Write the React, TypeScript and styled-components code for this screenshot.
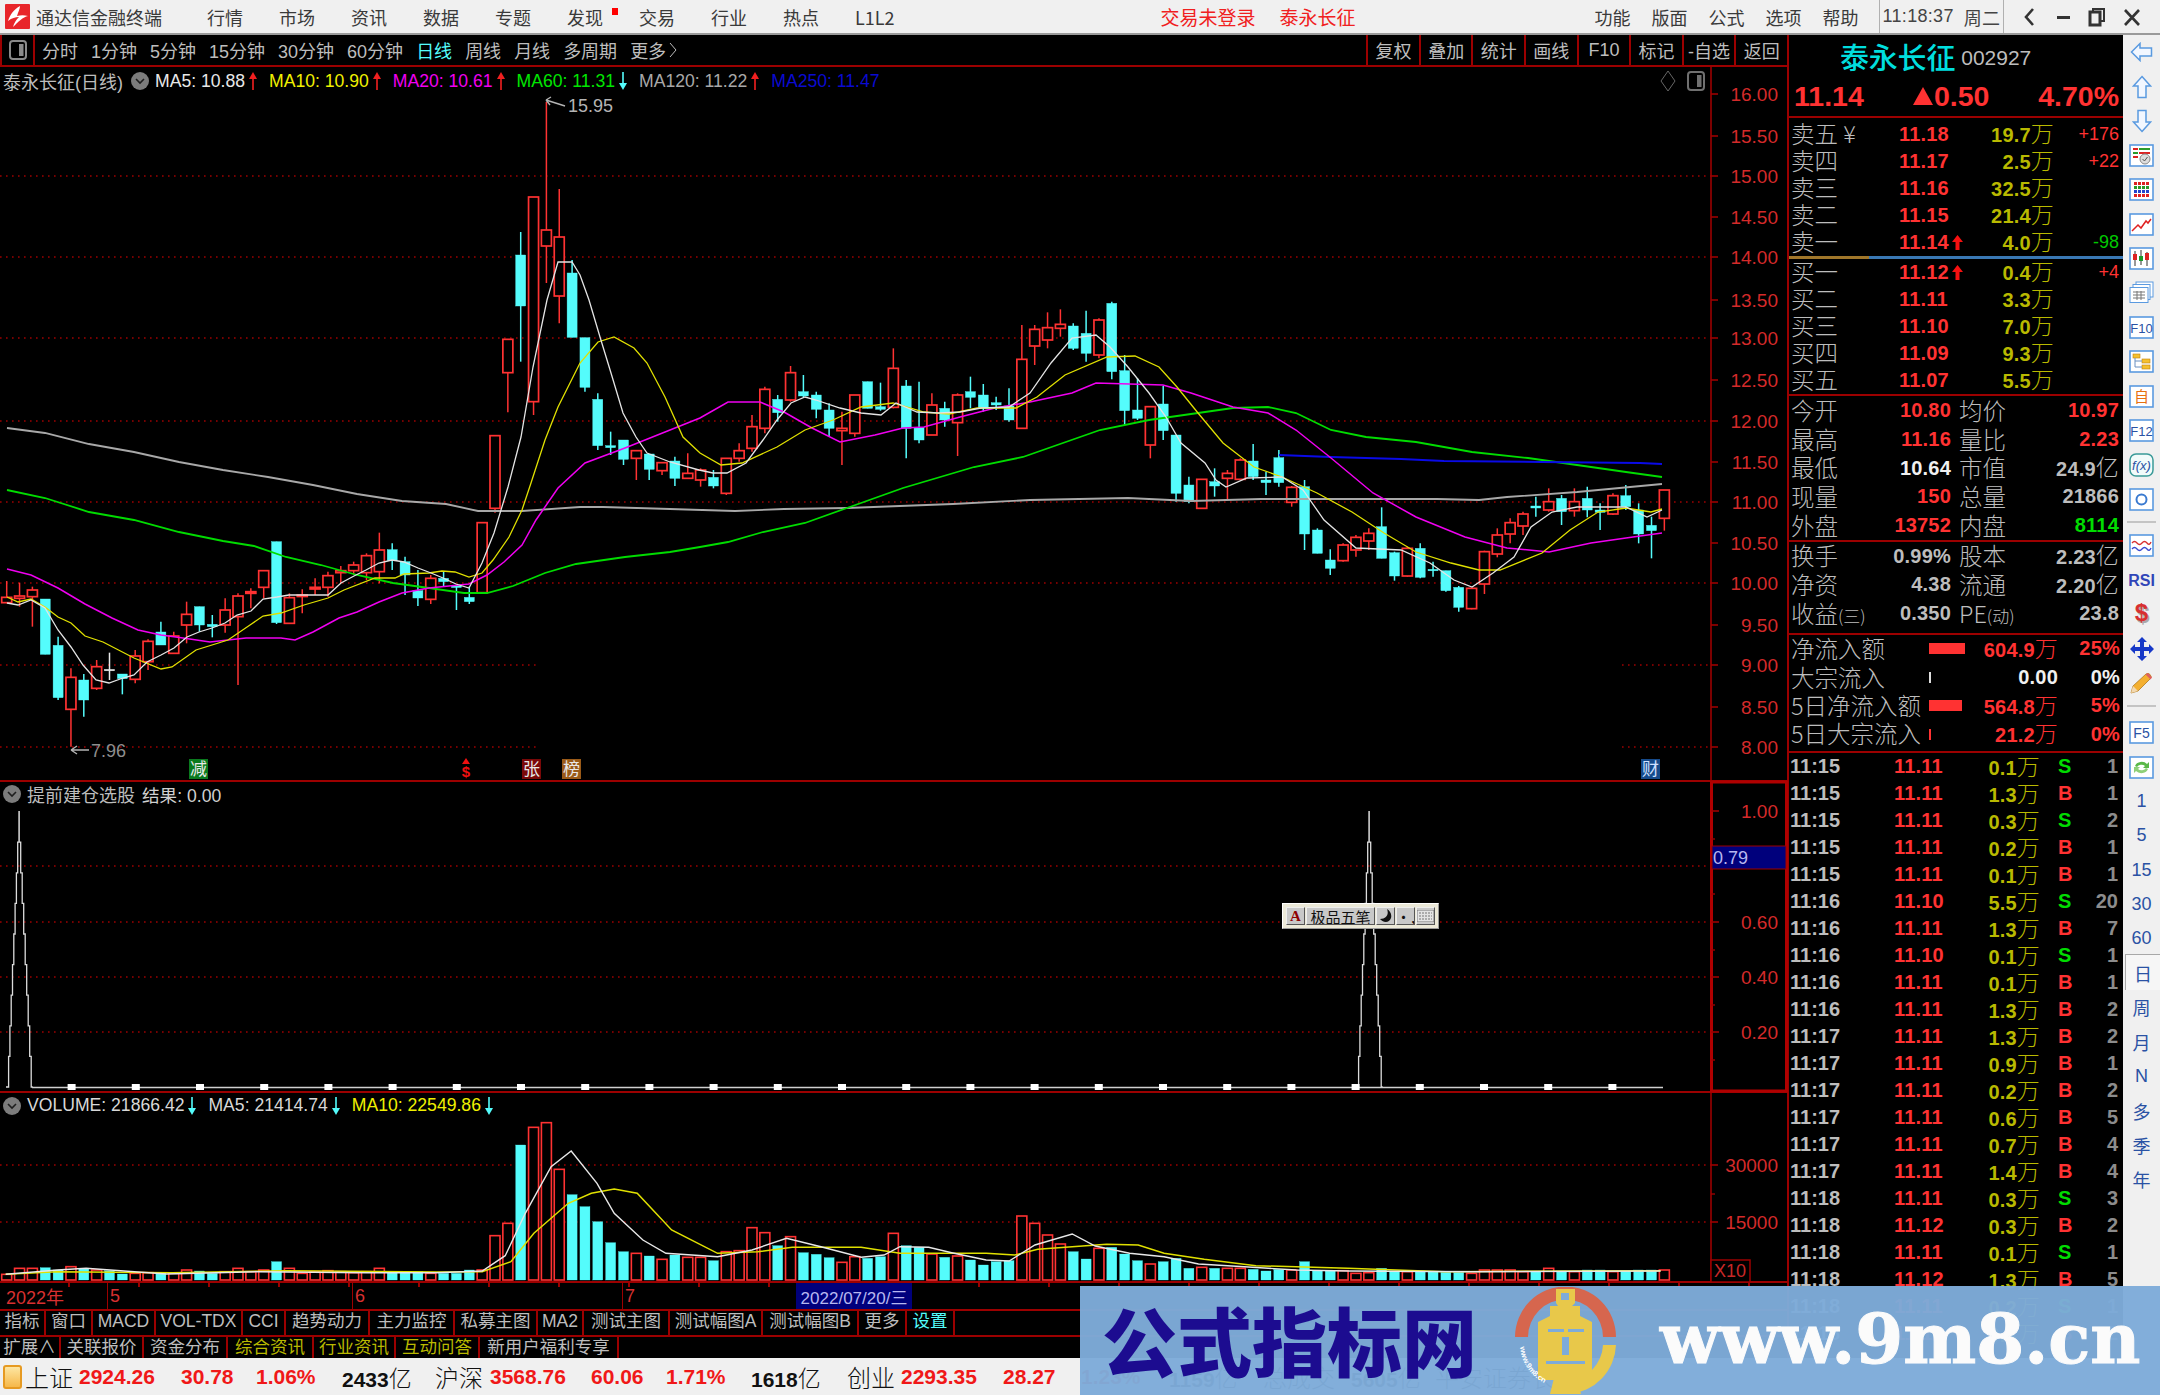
import React from 'react';
import styled, { createGlobalStyle } from 'styled-components';

const FONT = `"Liberation Sans","Noto Sans CJK SC",sans-serif`;
const CJK = `"Noto Sans CJK SC","Liberation Sans",sans-serif`;
const RED = '#ff3232';
const LINE = '#9c0000';
const GRAY = '#bdbdbd';
const CYAN = '#54fcfc';
const OLIVE = '#b9b900';

const Global = createGlobalStyle`
  html, body { margin: 0; padding: 0; background: #000; }
  #root { width: 2160px; height: 1395px; }
  * { box-sizing: border-box; }
`;

const Page = styled.div`
  position: relative;
  width: 2160px;
  height: 1395px;
  overflow: hidden;
  display: flex;
  flex-direction: column;
  background: #000;
  font-family: ${FONT};
  color: ${GRAY};
`;

/* ---------- title bar ---------- */
const TitleBar = styled.header`
  flex: 0 0 35px;
  display: flex;
  align-items: center;
  background: #f0f0f0;
  border-bottom: 2px solid #9a9a9a;
  color: #3a3a3a;
  font-size: 18px;
  font-family: ${CJK};
  white-space: nowrap;
`;
const AppName = styled.span`margin-left: 6px;`;
const Menu = styled.nav`
  display: flex;
  gap: ${(p: any) => p.$gap}px;
  margin-left: ${(p: any) => p.$ml}px;
`;
const MenuItem = styled.span`position: relative;`;
const MenuDot = styled.i`
  position: absolute;
  right: -15px;
  top: 4px;
  width: 6px;
  height: 7px;
  background: #f00;
`;
const Alert = styled.span`
  color: #f02020;
  font-size: 19px;
  margin-left: ${(p: any) => p.$ml}px;
`;
const ClockBox = styled.div`
  margin-left: 20px;
  width: 125px;
  height: 33px;
  display: flex;
  align-items: center;
  gap: 10px;
  padding-left: 3px;
  border-left: 1px solid #b0b0b0;
  border-right: 1px solid #b0b0b0;
  color: #444;
  font-family: ${FONT};
  letter-spacing: 0.3px;
`;
const WinControls = styled.div`
  display: flex;
  align-items: center;
  gap: 15px;
  padding-left: 16px;
`;

/* ---------- main layout ---------- */
const Body = styled.div`
  flex: 1;
  min-height: 0;
  display: flex;
`;
const LeftColumn = styled.section`
  flex: 0 0 1787px;
  display: flex;
  flex-direction: column;
`;
const Toolbar = styled.div`
  flex: 0 0 32px;
  display: flex;
  align-items: center;
  border-bottom: 2px solid ${LINE};
  font-size: 18px;
  font-family: ${CJK};
  white-space: nowrap;
`;
const LayoutSwitch = styled.div`
  flex: 0 0 35px;
  height: 100%;
  display: flex;
  align-items: center;
  justify-content: center;
  border-left: 2px solid ${LINE};
  border-right: 2px solid ${LINE};
`;
const Periods = styled.div`
  display: flex;
  align-items: center;
  gap: 13px;
  padding-left: 7px;
`;
const Period = styled.span`
  display: inline-flex;
  align-items: center;
  gap: 3px;
  color: ${(p: any) => (p.$active ? CYAN : GRAY)};
  font-family: ${FONT};
`;
const ToolCells = styled.div`
  margin-left: auto;
  display: flex;
  height: 100%;
`;
const ToolCell = styled.div`
  flex: 0 0 52.6px;
  display: flex;
  align-items: center;
  justify-content: center;
  border-left: 2px solid ${LINE};
  font-family: ${FONT};
`;

const Panel = styled.div`
  position: relative;
  flex: 0 0 ${(p: any) => p.$h}px;
  border-bottom: 2px solid ${LINE};
`;
const ChartSvg = styled.svg`
  display: block;
  width: 1787px;
  overflow: visible;
  text { font-family: ${FONT}; }
`;
const PanelHead = styled.div`
  position: absolute;
  left: 0;
  top: 0;
  width: 1711px;
  height: ${(p: any) => p.$h}px;
  display: flex;
  align-items: center;
  padding: 0 ${(p: any) => p.$pr || 0}px 0 3px;
  gap: 12px;
  font-size: 17.6px;
  white-space: nowrap;
`;
const PanelName = styled.span`
  font-size: 18px;
  color: ${GRAY};
  margin-right: ${(p: any) => p.$mr}px;
`;
const ChevronWrap = styled.span`
  display: inline-flex;
  margin-right: -6px;
`;
const MaStat = styled.span`
  display: inline-flex;
  align-items: center;
  gap: 4px;
  color: ${(p: any) => p.$c};
`;
const HeadTools = styled.div`
  margin-left: auto;
  display: flex;
  align-items: center;
  gap: 11px;
`;

const ImeBar = styled.div`
  position: absolute;
  left: 1282px;
  top: 121px;
  width: 157px;
  height: 26px;
  display: flex;
  gap: 1px;
  padding: 3px;
  background: #ece9d8;
  border: 1px solid #fff;
  border-right-color: #999;
  border-bottom-color: #999;
`;
const ImeBtn = styled.div`
  flex: ${(p: any) => (p.$wide ? '1 1 auto' : '0 0 19px')};
  display: flex;
  align-items: center;
  justify-content: center;
  background: #c8c8c8;
  border: 1px solid #eee;
  border-right-color: #555;
  border-bottom-color: #555;
  color: ${(p: any) => p.$c || '#111'};
  font-size: 15px;
  font-weight: ${(p: any) => (p.$bold ? 700 : 400)};
  font-family: ${(p: any) => (p.$bold ? '"Liberation Serif",serif' : CJK)};
  line-height: 1;
  white-space: nowrap;
  overflow: hidden;
`;

const DateBar = styled.div`
  flex: 0 0 23px;
  display: flex;
  border-bottom: 2px solid ${LINE};
  background: linear-gradient(#000, #000) 0 4px / 100% 100% no-repeat,
    repeating-linear-gradient(90deg, transparent 0 68px, ${LINE} 68px 70px);
  color: #d83030;
  font-size: 18px;
  white-space: nowrap;
`;
const DateCell = styled.div`
  flex: 0 0 ${(p: any) => p.$w}px;
  display: flex;
  align-items: center;
  padding-left: ${(p: any) => (p.$first ? 6 : 2)}px;
  border-left: ${(p: any) => (p.$first ? 0 : `1px solid ${LINE}`)};
`;
const DateCursor = styled.div`
  flex: 0 0 116px;
  display: flex;
  align-items: center;
  justify-content: center;
  background: #00007c;
  color: #b7b7f0;
  font-size: 17px;
`;

const TabRow = styled.div`
  flex: 0 0 ${(p: any) => p.$h}px;
  display: flex;
  border-bottom: 2px solid ${LINE};
  font-size: 17.5px;
  font-family: ${FONT};
  white-space: nowrap;
`;
const Tab = styled.div`
  flex: 0 0 ${(p: any) => p.$w}px;
  display: flex;
  align-items: center;
  justify-content: center;
  padding-bottom: 3px;
  line-height: 1.1;
  border-right: 2px solid ${LINE};
  color: ${(p: any) => p.$c || GRAY};
`;

/* ---------- quote panel ---------- */
const Quote = styled.aside`
  flex: 0 0 336px;
  height: 1323px;
  border-left: 2px solid ${LINE};
  overflow: hidden;
  white-space: nowrap;
`;
const NameRow = styled.div`
  height: 41px;
  display: flex;
  align-items: center;
  padding-left: 51px;
  gap: 6px;
`;
const StockName = styled.span`
  color: #00dede;
  font-size: 29px;
  font-family: ${CJK};
  letter-spacing: -0.2px;
  font-weight: 500;
`;
const StockCode = styled.span`
  font-size: 21px;
  padding-top: 5px;
`;
const PriceRow = styled.div`
  height: 42px;
  display: grid;
  grid-template-columns: 119px 1fr auto;
  align-items: center;
  padding: 0 4px 0 5px;
  color: ${RED};
  font-size: 28.5px;
  font-weight: 700;
  border-bottom: 2px solid ${LINE};
`;
const ChangeCell = styled.span`
  display: inline-flex;
  align-items: center;
  gap: 1px;
`;
const UpTriangle = styled.i`
  width: 0;
  height: 0;
  border-left: 10px solid transparent;
  border-right: 10px solid transparent;
  border-bottom: 18px solid ${RED};
`;
const Section = styled.div`
  padding-top: ${(p: any) => p.$pt || 0}px;
  padding-bottom: ${(p: any) => p.$pb || 0}px;
  border-bottom: 2px solid ${LINE};
`;
const SellBook = styled.div`padding-top: 2.5px;`;
const Divider = styled.div`
  height: 3px;
  background: linear-gradient(90deg, #a0762a 0 80px, #3a78b4 80px);
`;
const BookRow = styled.div`
  height: 27px;
  display: grid;
  grid-template-columns: 108px 71px 84px 65px;
  align-items: center;
  padding-left: 2px;
`;
const StatRow = styled.div`
  height: ${(p: any) => p.$h}px;
  display: grid;
  grid-template-columns: 52px 108px 8px 52px 108px;
  align-items: center;
  padding-left: 2px;
`;
const FlowRow = styled.div`
  height: 28.4px;
  display: grid;
  grid-template-columns: 138px 129px 62px;
  align-items: center;
  padding-left: 2px;
`;
const TickRow = styled.div`
  height: 27px;
  display: grid;
  grid-template-columns: 104px 60px 86px 18px 20px 40px;
  align-items: center;
  padding-left: 1px;
  font-size: 20px;
  font-weight: 700;
`;
const Label = styled.span`
  color: ${GRAY};
  font-size: 23.5px;
  font-family: ${CJK};
  font-weight: 300;
  line-height: 1;
`;
const LabelSmall = styled.span`font-size: 17px;`;
const Val = styled.span`
  color: ${(p: any) => p.$c || GRAY};
  font-size: 20px;
  font-weight: 700;
  letter-spacing: 0.2px;
  text-align: ${(p: any) => (p.$left ? 'left' : 'right')};
  display: ${(p: any) => (p.$left ? 'inline-flex' : 'inline')};
  align-items: center;
  gap: 3px;
`;
const Unit = styled.span`
  font-family: ${CJK};
  font-weight: 300;
  font-size: 23px;
  line-height: 1;
`;
const Delta = styled.span`
  color: ${(p: any) => p.$c};
  font-size: 18px;
  text-align: right;
`;
const FlowCell = styled.div`
  display: flex;
  align-items: center;
  justify-content: space-between;
`;
const FlowBar = styled.i`
  display: block;
  width: ${(p: any) => p.$w}px;
  height: 11px;
  background: ${(p: any) => p.$c};
`;
const TickSide = styled.span`
  color: ${(p: any) => (p.$buy ? RED : '#00dc00')};
`;
const TickCount = styled.span`
  color: #8c8c8c;
  text-align: right;
`;

/* ---------- side bar ---------- */
const Sidebar = styled.aside`
  flex: 0 0 37px;
  display: flex;
  flex-direction: column;
  background: #f0f0f0;
  color: #2a52a4;
  font-size: 18px;
  font-family: ${FONT};
`;
const SideItem = styled.div`
  flex: 0 0 34.4px;
  display: flex;
  align-items: center;
  justify-content: center;
  ${(p: any) => p.$active && `
    flex-basis: 36px;
    margin: -2px 0 0 2px;
    background: #f6f6f6;
    border-top: 1px solid #a8a8a8;
    border-left: 1px solid #a8a8a8;
  `}
`;
const SideSep = styled.div`
  flex: 0 0 2px;
  margin: 5px 4px ${(p: any) => p.$mb}px;
  background: #c4c4c4;
`;
const DollarGlyph = styled.svg`
  overflow: visible;
  text { font-family: ${FONT}; }
`;

/* ---------- status bar ---------- */
const StatusBar = styled.footer`
  flex: 0 0 37px;
  display: flex;
  align-items: center;
  background: #f0f0f0;
  white-space: nowrap;
  overflow: hidden;
`;
const StatusLed = styled.div`
  flex: 0 0 19px;
  height: 24px;
  margin: 0 3px;
  border: 2px solid #e69a22;
  border-radius: 3px;
  background: linear-gradient(#fde6a2, #f6b84a);
`;
const StatusCell = styled.span`
  flex: 0 0 ${(p: any) => p.$w}px;
  color: ${(p: any) => p.$c || '#111'};
  font-size: ${(p: any) => (p.$name ? 24 : 21)}px;
  font-weight: ${(p: any) => (p.$name ? 300 : 700)};
  font-family: ${(p: any) => (p.$name ? CJK : FONT)};
`;
const StatusUnit = styled.span`
  font-family: ${CJK};
  font-weight: 300;
  font-size: 23px;
`;

/* ---------- watermark ---------- */
const Watermark = styled.div`
  position: absolute;
  left: 1080px;
  top: 1286px;
  right: 0;
  bottom: 0;
  display: flex;
  align-items: center;
  padding-left: 22px;
  background: rgba(126, 171, 217, 0.97);
  white-space: nowrap;
`;
const WmTitle = styled.span`
  flex: 0 0 auto;
  color: #1c0c90;
  font-size: 75px;
  font-weight: 900;
  font-family: ${CJK};
  line-height: 1;
  padding-bottom: 4px;
`;
const WmLogo = styled.svg`
  flex: 0 0 107px;
  width: 107px;
  height: 107px;
  margin-left: 35px;
  text { font-family: ${FONT}; }
`;
const WmUrl = styled.span`
  flex: 0 0 auto;
  margin-left: 41px;
  padding-bottom: 4px;
  color: #fbfbfb;
  font-family: "DejaVu Serif", serif;
  font-weight: 700;
  font-size: 69px;
  line-height: 1;
  -webkit-text-stroke: 1px #fbfbfb;
`;

/* ---------- data ---------- */
type C = number[];
const leftC: C[] = [
  [1,892,908,843,910],[1,888,895,848,920],[1,870,890,860,980],[0,897,1063,897,1063],[0,1036,1193,1010,1200],
  [1,1132,1228,1105,1340],[0,1140,1200,1122,1250],[1,1100,1165,1080,1170],[2,1108,1111,1058,1140],[0,1122,1136,1122,1183],
  [1,1068,1138,1050,1150],[1,1024,1085,1018,1110],[0,996,1035,965,1035],[1,1008,1060,995,1062],[1,943,975,905,1030],
  [0,920,975,920,995],[0,973,980,945,1012],[1,930,975,895,998],[1,888,950,880,1155],[1,875,880,865,925],
  [1,812,862,812,895],[0,725,968,725,972],[1,893,970,880,970],[1,885,888,868,940],[1,862,867,835,885],
  [1,827,862,815,890],[1,812,818,798,850],[1,795,812,785,825],[1,767,818,760,840],[1,750,815,698,850],
  [0,749,782,730,810],[0,785,825,770,885],[0,872,894,810,918],[1,835,898,825,912],[0,835,845,815,860],
  [0,858,862,855,930],[0,892,905,860,912],[1,668,878,668,878],[1,407,625,407,638],[1,118,218,118,337],
  [0,-135,18,-204,185],[1,-309,305,-309,345],[1,-210,-162,-594,-51],[1,-189,-12,-333,70],[0,-81,112,-120,112],
  [0,113,262,113,275],[0,298,437,280,450],[0,437,443,395,465],[0,420,478,420,495],[1,452,475,452,540],
  [0,462,508,462,540],[1,488,512,488,525],[0,483,535,470,558],[1,520,535,460,535],[1,510,540,505,560],
];
const rightC: C[] = [
  [0,592,618,570,625],[1,535,640,535,645],[1,512,535,490,545],[1,440,505,405,515],[1,328,445,320,460],
  [0,358,398,345,425],[1,278,360,258,365],[0,335,348,285,352],[0,345,388,335,415],[0,390,445,370,470],
  [1,445,452,395,555],[1,345,460,345,470],[0,305,385,305,385],[0,380,388,308,392],[1,265,382,205,385],
  [0,318,445,300,535],[0,442,480,305,490],[1,375,465,340,465],[0,385,420,365,440],[1,345,428,340,528],
  [0,335,352,290,385],[0,345,385,312,395],[0,368,375,350,390],[0,378,420,325,425],[1,238,445,135,445],
  [1,148,198,135,255],[1,143,180,97,205],[1,133,145,88,170],[0,138,205,130,210],[0,160,220,92,245],
  [1,120,225,115,235],[0,70,275,65,298],[0,272,392,225,435],[0,390,415,295,420],[1,380,495,380,535],
  [0,372,452,318,480],[0,465,640,465,665],[0,615,665,590,670],[1,598,685,598,685],[0,605,618,565,650],
  [1,580,595,570,660],[1,540,598,535,600],[0,543,590,492,600],[0,600,608,575,645],[0,533,608,510,620],
  [1,622,667,618,680],[0,620,762,600,810],[0,750,820,745,820],[0,840,865,808,885],[1,795,842,790,845],
  [1,772,810,765,830],[1,760,783,745,810],[0,740,835,682,835],[0,818,888,815,902],[1,805,888,800,890],
  [0,805,892,790,895],[0,868,870,845,890],[0,872,932,872,935],[0,922,982,918,995],[1,925,986,925,988],
  [1,815,912,812,942],[1,765,822,745,832],[1,728,762,715,790],[1,702,738,695,765],[0,678,684,650,710],
  [1,665,690,625,695],[0,655,695,645,735],[1,665,692,625,710],[0,655,690,620,712],[0,690,697,670,750],
  [1,647,702,640,705],[0,647,680,615,690],[0,690,762,670,790],[0,736,752,710,835],[1,630,715,630,752],
];
const toReal = (c: C, base: number) => [c[0], base + c[1] / 3, base + c[2] / 3, base + c[3] / 3, base + c[4] / 3];
const candles = [...leftC.map(c => toReal(c, 300)), ...rightC.map(c => toReal(c, 280))];
const xOf = (i: number) => 6.7 + 12.85 * i;

const MA5 = '7,603 18,605 31,600 45,608 58,630 71,647 83,665 96,680 109,683 123,678 134,675 147,662 161,655 174,648 187,637 199,632 212,628 225,623 237,615 251,611 263,599 277,597 289,595 328,595 341,583 354,576 366,570 379,563 392,560 404,562 418,568 431,573 443,578 456,584 469,588 482,563 494,533 508,487 521,437 533,367 547,300 558,262 572,262 580,275 589,300 600,337 611,373 623,413 636,437 647,453 670,462 699,470 713,473 727,473 746,463 763,440 777,420 791,403 805,397 816,400 840,408 861,413 881,415 896,403 917,412 939,413 960,412 981,408 1009,407 1030,393 1051,363 1072,338 1096,335 1110,347 1128,367 1149,393 1166,417 1181,443 1205,463 1216,480 1226,487 1247,478 1282,477 1303,490 1324,520 1356,548 1401,550 1430,563 1454,580 1472,587 1493,573 1514,557 1531,527 1552,512 1577,507 1626,507 1647,517 1662,510';
const MA10 = '7,597 18,602 31,599 45,607 58,617 71,623 85,636 103,642 134,658 161,669 172,667 196,650 228,640 250,625 263,616 281,613 304,605 328,598 344,590 375,578 395,578 404,574 429,573 442,571 455,572 469,577 482,573 493,560 509,537 522,510 531,483 545,440 558,407 580,363 598,342 614,337 634,348 647,363 665,397 683,437 700,453 721,465 742,463 777,447 805,430 833,420 861,407 893,403 924,412 949,414 977,408 1016,408 1037,397 1065,375 1107,357 1135,356 1159,367 1177,387 1198,413 1223,443 1254,467 1282,477 1317,493 1352,512 1384,533 1416,552 1451,563 1479,570 1500,570 1542,553 1570,530 1598,512 1626,508 1651,512 1662,509';
const MA20 = '7,569 31,575 58,588 85,604 112,618 138,630 161,635 183,638 210,642 246,638 281,638 295,640 313,632 339,618 357,612 379,602 402,593 429,588 469,584 487,575 504,562 522,545 536,520 558,488 585,463 625,448 665,432 700,418 728,402 760,402 784,412 812,428 840,442 875,435 903,428 924,427 960,417 995,408 1030,402 1072,393 1096,383 1163,385 1191,393 1233,407 1268,413 1296,430 1331,458 1373,493 1416,517 1465,537 1507,548 1549,552 1591,543 1633,537 1662,533';
const MA60 = '7,490 45,498 89,512 134,520 179,532 223,541 254,546 286,557 321,565 357,575 393,583 429,588 464,593 487,593 513,586 545,573 576,564 625,557 670,552 700,547 728,542 763,532 805,523 847,508 903,488 974,467 1023,457 1100,430 1149,420 1233,408 1268,407 1296,413 1331,430 1366,437 1416,442 1472,452 1528,458 1577,465 1626,472 1662,477';
const MA120 = '7,428 45,433 89,444 134,452 179,462 223,470 268,477 313,485 357,494 402,501 446,504 478,511 522,511 580,507 603,507 670,509 735,511 784,509 847,508 953,504 1030,500 1128,498 1191,501 1261,499 1437,499 1479,500 1507,497 1577,492 1662,484';
const MA250 = '1279,455 1331,457 1401,459 1444,461 1542,462 1640,463 1662,464';

const volZ = [
  553,535,535,-533,-540,530,-535,540,-542,-552,550,548,-550,550,540,-543,-550,545,535,545,
  540,-515,535,550,545,542,545,548,545,535,-545,-545,-545,550,-550,-550,-540,540,437,400,
  -165,112,98,238,-314,-350,-395,-458,-485,490,-498,508,-495,502,502,-512,485,482,413,428,
  -467,440,-488,-493,-503,517,500,-505,-500,430,
  -467,-472,492,-502,498,-510,-525,-515,-512,378,400,435,462,-485,-507,475,-472,-492,-512,522,
  -515,-505,-535,532,-535,535,535,-538,-543,-538,540,-515,-543,-543,542,550,548,-535,-543,545,
  -543,-545,-547,-547,550,540,540,540,545,-545,535,-543,545,-540,-540,545,-543,-540,-540,540,
];
const z9 = (pts: number[][]) => pts.map(([x, y]) => `${(x / 1.742).toFixed(1)},${(1090 + y / 3).toFixed(1)}`);
const z10 = (pts: number[][]) => pts.map(([x, y]) => `${(900 + x / 1.742).toFixed(1)},${(1090 + y / 3).toFixed(1)}`);
const VOL5 = [...z9([[10,553],[100,540],[150,535],[290,552],[450,545],[640,548],[760,548],[840,543],[880,497],[915,370],[960,230],[995,183],[1040,280],[1070,370],[1120,450],[1160,490],[1250,500],[1310,480],[1370,445],[1430,470],[1500,502],[1540,495]]), ...z10([[0,470],[50,472],[90,488],[150,510],[190,513],[235,465],[300,432],[340,468],[400,490],[460,500],[520,522],[600,530],[690,540],[780,543],[1000,545],[1325,543]])].join(' ');
const VOL10 = [...z9([[10,553],[100,545],[300,548],[500,542],[760,546],[840,545],[890,515],[930,430],[990,340],[1030,310],[1070,297],[1110,310],[1170,420],[1250,490],[1320,485],[1380,472],[1500,472]]), ...z10([[0,490],[150,490],[200,495],[240,478],[360,463],[415,465],[460,490],[530,508],[620,527],[780,535],[950,545],[1325,542]])].join(' ');

const spike = (cx: number) => {
  const base = 1087, pts: string[] = [];
  for (let k = 0; k <= 9; k++) {
    const x = (cx - 11.7 + k * 1.3).toFixed(1);
    pts.push(`${x},${base - k * 30.6 + (k ? 30.6 : 0)}`, `${x},${base - k * 30.6}`);
  }
  for (let k = 9; k >= 0; k--) {
    const x = (cx + 13.7 - k * 1.5).toFixed(1);
    pts.push(`${x},${base - k * 30.6 - 0}`, `${x},${base - k * 30.6 + (k ? 30.6 : 0)}`);
  }
  return pts.join(' ');
};

/* ---------- small drawings ---------- */
const Arrow = ({ up, c }: { up?: boolean; c: string }) => (
  <svg width="8" height="18" viewBox="0 0 8 18">
    {up ? (
      <><polygon points="4,0 8,7 0,7" fill={c} /><rect x="3.2" y="5" width="1.6" height="13" fill={c} /></>
    ) : (
      <><polygon points="4,18 8,11 0,11" fill={c} /><rect x="3.2" y="0" width="1.6" height="13" fill={c} /></>
    )}
  </svg>
);
const BookArrow = () => (
  <svg width="11" height="15" viewBox="0 0 11 15">
    <polygon points="5.500,0 11,7 7.500,7 7.500,15 3.500,15 3.500,7 0,7" fill="#f81010" />
  </svg>
);
const Chevron = () => (
  <ChevronWrap>
    <svg width="18" height="18" viewBox="0 0 18 18">
      <circle cx="9" cy="9" r="9" fill="#7c7c7c" />
      <path d="M5 7l4 4 4-4" stroke="#1e1e1e" strokeWidth="1.6" fill="none" />
    </svg>
  </ChevronWrap>
);
const PanelIcon = ({ c = '#8a8a8a' }: { c?: string }) => (
  <svg width="18" height="20" viewBox="0 0 18 20">
    <rect x="1" y="1" width="16" height="18" rx="3" fill="none" stroke={c} strokeWidth="2" />
    <rect x="10" y="4" width="4.5" height="12" fill={c} />
  </svg>
);
const Logo = () => (
  <svg width="25" height="25" viewBox="0 0 25 25" style={{ marginLeft: 5, flex: '0 0 25px' }}>
    <rect width="25" height="25" rx="1" fill="#e8252a" />
    <path d="M15 2C8 6 5 11 3 17c4-3 7-4 11-4-3 3-5 6-6 10 5-5 10-10 15-11-4-1-7-1-11 0 1-4 3-7 3-10z" fill="#fff" />
  </svg>
);

const IconFrame = ({ children }: { children?: React.ReactNode }) => (
  <svg width="25" height="23" viewBox="0 0 25 23">
    <rect x="1" y="1" width="23" height="21" fill="#fff" stroke="#5a9ae0" strokeWidth="1.6" />
    {children}
  </svg>
);
const BoxText = ({ t, c = '#2a52a4', size = 14 }: { t: string; c?: string; size?: number }) => (
  <IconFrame>
    <text x="12.5" y="16.5" textAnchor="middle" fontSize={size} fontFamily={FONT} fill={c}>{t}</text>
  </IconFrame>
);
const ArrowOutline = ({ dir }: { dir: 'l' | 'u' | 'd' }) => {
  const shapes = {
    l: { w: 23, h: 20, p: '1.5,10 10,1.5 10,6 21.5,6 21.5,14 10,14 10,18.5' },
    u: { w: 20, h: 24, p: '10,1.5 18.5,11 14,11 14,22.5 6,22.5 6,11 1.5,11' },
    d: { w: 20, h: 24, p: '10,22.5 18.5,13 14,13 14,1.5 6,1.5 6,13 1.5,13' },
  }[dir];
  return (
    <svg width={shapes.w} height={shapes.h} viewBox={`0 0 ${shapes.w} ${shapes.h}`}>
      <polygon points={shapes.p} fill="#f2f7ff" stroke="#5a9ae0" strokeWidth="1.5" />
    </svg>
  );
};
const sideIcons: React.ReactNode[] = [
  <ArrowOutline dir="l" />,
  <ArrowOutline dir="u" />,
  <ArrowOutline dir="d" />,
  <IconFrame>
    <rect x="4" y="4" width="5" height="2" fill="#d22" /><rect x="10" y="4" width="11" height="2" fill="#2a9a2a" />
    <rect x="4" y="8" width="5" height="2" fill="#2a9a2a" /><rect x="10" y="8" width="11" height="2" fill="#d22" />
    <rect x="4" y="12" width="5" height="2" fill="#d22" />
    <circle cx="16" cy="15" r="5" fill="#ddd" stroke="#888" /><path d="M13.5 15l2 2 3-4" stroke="#555" fill="none" />
  </IconFrame>,
  <IconFrame>
    {[5, 9, 13, 17].map(x => (
      <g key={x}>
        <rect x={x} y="4" width="3" height="3" fill="#d22" /><rect x={x} y="8" width="3" height="3" fill="#2a9a2a" />
        <rect x={x} y="12" width="3" height="3" fill="#2244cc" /><rect x={x} y="16" width="3" height="3" fill="#d22" />
      </g>
    ))}
  </IconFrame>,
  <IconFrame><path d="M3 18l6-6 3 3 5-7 2 2 3-4" stroke="#e02020" strokeWidth="1.5" fill="none" /></IconFrame>,
  <IconFrame>
    <path d="M6 4v15M12 3v15M18 5v14" stroke="#333" />
    <rect x="4" y="7" width="4" height="6" fill="#d22" /><rect x="10" y="9" width="4" height="5" fill="#1a9a2a" /><rect x="16" y="6" width="4" height="7" fill="#d22" />
  </IconFrame>,
  <svg width="25" height="23" viewBox="0 0 25 23">
    <rect x="7" y="1" width="17" height="15" fill="#fff" stroke="#5a9ae0" /><rect x="4" y="3.5" width="17" height="15" fill="#fff" stroke="#5a9ae0" />
    <rect x="1" y="6.5" width="18" height="15" fill="#fff" stroke="#5a9ae0" />
    <path d="M4 11h12M4 14h12M4 17h12M8 10v9M12 10v9" stroke="#777" />
  </svg>,
  <BoxText t="F10" size={13} />,
  <IconFrame>
    <rect x="4" y="4" width="7" height="4" fill="#f4c030" stroke="#c08010" strokeWidth=".6" />
    <rect x="13" y="9" width="8" height="4" fill="#f4c030" stroke="#c08010" strokeWidth=".6" />
    <rect x="13" y="15" width="8" height="4" fill="#f4c030" stroke="#c08010" strokeWidth=".6" />
    <path d="M6 8v9h7M6 11h7" stroke="#6a90c0" fill="none" />
  </IconFrame>,
  <BoxText t="自" c="#e87010" size={15} />,
  <BoxText t="F12" size={13} />,
  <svg width="25" height="24" viewBox="0 0 25 24">
    <rect x="1" y="1" width="23" height="22" rx="6" fill="#f2fbfa" stroke="#3a9a98" strokeWidth="1.5" />
    <text x="12.5" y="17" textAnchor="middle" fontSize="13" fontStyle="italic" fontFamily={FONT} fill="#2a52a4">f(x)</text>
  </svg>,
  <IconFrame><circle cx="12.5" cy="11.5" r="5" fill="none" stroke="#3a7ad0" strokeWidth="2" /></IconFrame>,
  'sep5',
  <IconFrame>
    <path d="M3 9q2.5-3 5 0t5 0 5 0 4-1" stroke="#d83030" strokeWidth="1.3" fill="none" />
    <path d="M3 15q2.5-3 5 0t5 0 5 0 4-1" stroke="#3a4ad0" strokeWidth="1.3" fill="none" />
  </IconFrame>,
  <svg width="27" height="18" viewBox="0 0 27 18">
    <text x="13.5" y="15" textAnchor="middle" fontSize="16" fontWeight="700" fontFamily={FONT} fill="#3046b8">RSI</text>
  </svg>,
  <DollarGlyph width="26" height="30" viewBox="0 0 26 30">
    <text x="14" y="24" textAnchor="middle" fontSize="24" fontWeight="700" fill="#aaa">$</text>
    <text x="12.5" y="22" textAnchor="middle" fontSize="24" fontWeight="700" fill="#d83030">$</text>
  </DollarGlyph>,
  <svg width="26" height="24" viewBox="0 0 26 24">
    <path d="M13 0l5 5h-3v5h5V7l5 5-5 5v-3h-5v5h3l-5 5-5-5h3v-5H6v3l-5-5 5-5v3h5V5H8z" fill="#1638c8" />
  </svg>,
  <svg width="26" height="24" viewBox="0 0 26 24">
    <path d="M2 22l2-7L17 3q2-1.500 4 .500t.5 4L9 20z" fill="#f4b030" stroke="#b07820" strokeWidth=".8" />
    <path d="M2 22l2-7 5 5z" fill="#f2d8b0" /><path d="M16.500 3.500l5 5 1.500-2-4-4.500z" fill="#e06060" />
  </svg>,
  'sep8',
  <BoxText t="F5" />,
  <IconFrame>
    <path d="M6 10a7 6 0 0 1 12-2l2-2v6h-6l2-2a5 4 0 0 0-8 1z" fill="#5ab848" />
    <path d="M19 13a7 6 0 0 1-12 2l-2 2v-6h6l-2 2a5 4 0 0 0 8-1z" fill="#8ed078" />
  </IconFrame>,
];
const sidePeriods = ['1', '5', '15', '30', '60', '日', '周', '月', 'N', '多', '季', '年'];

const Candle = ({ c, i }: { c: number[]; i: number }) => {
  const x = xOf(i);
  const [up, bt, bb, wt, wb] = c;
  const col = up === 1 ? RED : up === 2 ? '#e8e8e8' : CYAN;
  return (
    <g>
      <line x1={x} x2={x} y1={wt} y2={wb} stroke={col} strokeWidth="1.5" />
      <rect
        x={x - 5} y={bt} width={10} height={Math.max(bb - bt, 1.5)}
        fill={up === 1 ? '#000' : col}
        stroke={col} strokeWidth={up === 1 ? 1.7 : 0.4}
      />
    </g>
  );
};
const Grid = ({ ys, segs }: { ys: number[]; segs?: Record<number, number[][]> }) => (
  <g stroke={LINE} strokeWidth="1.5" strokeDasharray="1.6 4.4">
    {ys.map(y =>
      (segs?.[y] || [[0, 1711]]).map(([a, b]) => <line key={`${y}-${a}`} x1={a} x2={b} y1={y} y2={y} />)
    )}
  </g>
);
const Axis = ({ x = 1711, y1, y2, ticks }: { x?: number; y1: number; y2: number; ticks: number[] }) => (
  <g stroke={LINE} strokeWidth="1.6">
    <line x1={x} x2={x} y1={y1} y2={y2} />
    {ticks.map(t => <line key={t} x1={x} x2={x + 7} y1={t} y2={t} />)}
  </g>
);
const AxisLabel = ({ y, t }: { y: number; t: string }) => (
  <text x={1778} y={y + 7} textAnchor="end" fontSize="19" fill="#d42a2a">{t}</text>
);
const Marker = ({ x, w = 19, bg, t, fg = '#e8e8e8' }: { x: number; w?: number; bg: string; t: string; fg?: string }) => (
  <g>
    <rect x={x} y={759} width={w} height={20} fill={bg} />
    <text x={x + w / 2} y={775} textAnchor="middle" fontSize="17" fill={fg} style={{ fontFamily: CJK }}>{t}</text>
  </g>
);

const priceLabels: [number, string][] = [
  [94,'16.00'],[136,'15.50'],[176,'15.00'],[217,'14.50'],[257,'14.00'],[300,'13.50'],[338,'13.00'],[380,'12.50'],
  [421,'12.00'],[462,'11.50'],[502,'11.00'],[543,'10.50'],[583,'10.00'],[625,'9.50'],[665,'9.00'],[707,'8.50'],[747,'8.00'],
];

const PriceChart = () => (
  <ChartSvg height="713" viewBox="0 67 1787 713">
    <Grid
      ys={[176, 257, 338, 421, 502, 583, 665, 747]}
      segs={{ 665: [[0, 538], [1622, 1711]], 747: [[0, 538], [1622, 1711]] }}
    />
    <Axis y1={67} y2={781} ticks={priceLabels.map(l => l[0])} />
    {priceLabels.map(([y, t]) => <AxisLabel key={t} y={y} t={t} />)}
    {candles.map((c, i) => <Candle key={i} c={c} i={i} />)}
    <polyline points={MA120} fill="none" stroke="#a8a8a8" strokeWidth="1.8" />
    <polyline points={MA60} fill="none" stroke="#00dc00" strokeWidth="1.8" />
    <polyline points={MA250} fill="none" stroke="#0a0ae6" strokeWidth="2" />
    <polyline points={MA20} fill="none" stroke="#f000f0" strokeWidth="1.5" />
    <polyline points={MA10} fill="none" stroke="#e0e000" strokeWidth="1.3" />
    <polyline points={MA5} fill="none" stroke="#e4e4e4" strokeWidth="1.3" />
    <g stroke="#b4b4b4" strokeWidth="1.4" fill="none">
      <path d="M546 100l19 6M546 100l5-3M546 100l4 5" />
      <path d="M71 750h18M71 750l6-4M71 750l6 4" />
    </g>
    <text x={568} y={112} fontSize="18" fill="#b4b4b4">15.95</text>
    <text x={91} y={757} fontSize="18" fill="#8e8e8e">7.96</text>
    <Marker x={189} bg="#0a7a1e" t="减" />
    <Marker x={522} bg="#7a0808" t="张" />
    <Marker x={562} bg="#9a5a18" t="榜" />
    <Marker x={1641} bg="#164a8a" t="财" fg="#cfe0ff" />
    <polygon points="466,758 470,764 462,764" fill="#f01010" />
    <text x={466} y={777} textAnchor="middle" fontSize="15" fontWeight="700" fill="#f01010">$</text>
  </ChartSvg>
);

const squares = Array.from({ length: 25 }, (_, k) => 71.6 + 64.2 * k);
const IndicatorChart = () => (
  <ChartSvg height="309" viewBox="0 782 1787 309">
    <Grid ys={[866, 922, 977, 1032]} />
    <polyline points={`6,1087 ${spike(19)} 32,1087`} fill="none" stroke="#dcdcdc" strokeWidth="1.3" />
    <polyline points={spike(1369)} fill="none" stroke="#dcdcdc" strokeWidth="1.3" />
    <line x1={32} x2={1663} y1={1087.5} y2={1087.5} stroke="#cfcfcf" strokeWidth="1.5" />
    {squares.map(x => <rect key={x} x={x - 4} y={1084} width={8} height={6} fill="#fff" />)}
    <rect x="1711.5" y="782" width="75" height="309" fill="none" stroke="#b00000" strokeWidth="3" />
    {[811, 866, 922, 977, 1032].map(y => <line key={y} x1={1711} x2={1719} y1={y} y2={y} stroke={LINE} strokeWidth="1.6" />)}
    {[839, 894, 950, 1005, 1060].map(y => <line key={y} x1={1711} x2={1715} y1={y} y2={y} stroke={LINE} strokeWidth="1.4" />)}
    {[[811, '1.00'], [922, '0.60'], [977, '0.40'], [1032, '0.20']].map(([y, t]) => (
      <AxisLabel key={t as string} y={y as number} t={t as string} />
    ))}
    <rect x="1712" y="846" width="74" height="23" fill="#00007c" stroke="#9c0000" />
    <text x={1713} y={864} fontSize="18" fill="#b7b7f0">0.79</text>
  </ChartSvg>
);
const VolumeChart = () => (
  <ChartSvg height="188" viewBox="0 1093 1787 188">
    <Grid ys={[1165, 1222]} />
    <Axis y1={1093} y2={1282} ticks={[1165, 1222]} />
    <line x1={1711} x2={1715} y1={1194} y2={1194} stroke={LINE} strokeWidth="1.4" />
    <AxisLabel y={1165} t="30000" />
    <AxisLabel y={1222} t="15000" />
    <rect x="1711" y="1260" width="39" height="22" fill="#000" stroke={LINE} strokeWidth="1.5" />
    <text x={1730} y={1277} textAnchor="middle" fontSize="18" fill="#c82828">X10</text>
    {volZ.map((v, i) => {
      const red = v > 0;
      const top = 1090 + Math.abs(v) / 3;
      return (
        <rect
          key={i} x={xOf(i) - 5} y={top} width={10} height={1280 - top}
          fill={red ? '#000' : CYAN} stroke={red ? RED : CYAN} strokeWidth={red ? 1.6 : 0.3}
        />
      );
    })}
    <polyline points={VOL10} fill="none" stroke="#e0e000" strokeWidth="1.5" />
    <polyline points={VOL5} fill="none" stroke="#e8e8e8" strokeWidth="1.4" />
  </ChartSvg>
);

const WatermarkLogo = () => (
  <WmLogo viewBox="0 0 107 107">
    <defs><path id="wm-arc" d="M8 60a46 46 0 0 0 40 41" /></defs>
    <path d="M3 50a50.500 50.500 0 0 1 101 0h-13a37.500 37.500 0 0 0-75 0z" fill="#d6664e" />
    <path d="M104 58a51 51 0 0 1-47 49v-13a38 38 0 0 0 34-36z" fill="#e8c84a" />
    <path d="M44 2h19v14l-3 3h8v10l12 6v58H26V35l12-6V19h8l-2-3z" fill="#e8c84a" />
    <path d="M49 6h8v7h-8zM36 42h16v3H36zM56 42h16v3H56zM50 50h7v18h-7zM34 74h39v3H34z" fill="#7eabd9" />
    <path d="M44 83h19l6 24H38z" fill="#e8c84a" />
    <text fontSize="7.500" fill="#fff" fontWeight="700"><textPath href="#wm-arc">www.9m8.cn</textPath></text>
  </WmLogo>
);

const book = [
  ['卖五', '¥', '11.18', '', '19.7', '+176'],
  ['卖四', '', '11.17', '', '2.5', '+22'],
  ['卖三', '', '11.16', '', '32.5', ''],
  ['卖二', '', '11.15', '', '21.4', ''],
  ['卖一', '', '11.14', 'up', '4.0', '-98'],
];
const bookBuy = [
  ['买一', '', '11.12', 'up', '0.4', '+4'],
  ['买二', '', '11.11', '', '3.3', ''],
  ['买三', '', '11.10', '', '7.0', ''],
  ['买四', '', '11.09', '', '9.3', ''],
  ['买五', '', '11.07', '', '5.5', ''],
];
const BookLine = ({ r }: { r: string[] }) => (
  <BookRow>
    <Label>{r[0]}{r[1] && ` ${r[1]}`}</Label>
    <Val $c={RED} $left>{r[2]}{r[3] && <BookArrow />}</Val>
    <Val $c={OLIVE}>{r[4]}<Unit>万</Unit></Val>
    <Delta $c={r[5].startsWith('-') ? '#00c800' : RED}>{r[5]}</Delta>
  </BookRow>
);
const stats: [string, string, string, string, string, string][] = [
  ['今开', '10.80', RED, '均价', '10.97', RED],
  ['最高', '11.16', RED, '量比', '2.23', RED],
  ['最低', '10.64', '#f0f0f0', '市值', '24.9|亿', GRAY],
  ['现量', '150', RED, '总量', '21866', GRAY],
  ['外盘', '13752', RED, '内盘', '8114', '#00dc00'],
];
const withUnit = (s: string) => {
  const [a, u] = s.split('|');
  return u ? <>{a}<Unit>{u}</Unit></> : a;
};
const ticks: [string, string, string, string, string][] = [
  ['11:15','11.11','0.1','S','1'],['11:15','11.11','1.3','B','1'],['11:15','11.11','0.3','S','2'],['11:15','11.11','0.2','B','1'],
  ['11:15','11.11','0.1','B','1'],['11:16','11.10','5.5','S','20'],['11:16','11.11','1.3','B','7'],['11:16','11.10','0.1','S','1'],
  ['11:16','11.11','0.1','B','1'],['11:16','11.11','1.3','B','2'],['11:17','11.11','1.3','B','2'],['11:17','11.11','0.9','B','1'],
  ['11:17','11.11','0.2','B','2'],['11:17','11.11','0.6','B','5'],['11:17','11.11','0.7','B','4'],['11:17','11.11','1.4','B','4'],
  ['11:18','11.11','0.3','S','3'],['11:18','11.12','0.3','B','2'],['11:18','11.11','0.1','S','1'],['11:18','11.12','1.3','B','5'],
  ['11:18','11.11','0.2','S','1'],['11:18','11.12','0.4','B','2'],
];
const tabs1: [string, number, string?][] = [
  ['指标',46],['窗口',47],['MACD',63],['VOL-TDX',87],['CCI',43],['趋势动力',84],['主力监控',85],['私募主图',83],['MA2',46],['测试主图',86],['测试幅图A',93],['测试幅图B',96],['更多',48],['设置',48,CYAN],
];
const tabs2: [string, number, string?][] = [
  ['扩展∧',61],['关联报价',83],['资金分布',84],['综合资讯',86,OLIVE],['行业资讯',82,OLIVE],['互动问答',84,OLIVE],['新用户福利专享',139],
];
const status: [string, number, string?, boolean?][] = [
  ['上证',54,undefined,true],['2924.26',102,'#f01818'],['30.78',75,'#f01818'],['1.06%',86,'#f01818'],['2433|亿',93],
  ['沪深',55,undefined,true],['3568.76',101,'#f01818'],['60.06',75,'#f01818'],['1.71%',85,'#f01818'],['1618|亿',96],
  ['创业',54,undefined,true],['2293.35',102,'#f01818'],['28.27',78,'#f01818'],['1.23%',88,'#f01818'],['1159|亿',94],
  ['总成交',88,undefined,true],['5605|亿',84],['平安证券长沙',300,undefined,true],
];

export default function App() {
  return (
    <Page>
      <Global />
      <TitleBar>
        <Logo />
        <AppName>通达信金融终端</AppName>
        <Menu $ml={45} $gap={36}>
          <MenuItem>行情</MenuItem><MenuItem>市场</MenuItem><MenuItem>资讯</MenuItem><MenuItem>数据</MenuItem>
          <MenuItem>专题</MenuItem><MenuItem>发现<MenuDot /></MenuItem><MenuItem>交易</MenuItem><MenuItem>行业</MenuItem>
          <MenuItem>热点</MenuItem><MenuItem>L1L2</MenuItem>
        </Menu>
        <Alert $ml={266}>交易未登录</Alert>
        <Alert $ml={24}>泰永长征</Alert>
        <Menu $ml={239} $gap={21}>
          <MenuItem>功能</MenuItem><MenuItem>版面</MenuItem><MenuItem>公式</MenuItem><MenuItem>选项</MenuItem><MenuItem>帮助</MenuItem>
        </Menu>
        <ClockBox><span>11:18:37</span><span>周二</span></ClockBox>
        <WinControls>
          <svg width="20" height="22" viewBox="0 0 20 22"><path d="M13 3l-7 8 7 8" fill="none" stroke="#333" strokeWidth="2.6" /></svg>
          <svg width="17" height="22" viewBox="0 0 17 22"><rect x="2" y="10" width="13" height="3" fill="#333" /></svg>
          <svg width="20" height="22" viewBox="0 0 20 22"><path d="M6 6V3h11v12h-4" fill="none" stroke="#333" strokeWidth="2" /><rect x="3" y="6" width="10" height="13" fill="none" stroke="#333" strokeWidth="3" /></svg>
          <svg width="20" height="22" viewBox="0 0 20 22"><path d="M3 4l14 15M17 4L3 19" stroke="#333" strokeWidth="2.6" /></svg>
        </WinControls>
      </TitleBar>

      <Body>
        <LeftColumn>
          <Toolbar>
            <LayoutSwitch><PanelIcon /></LayoutSwitch>
            <Periods>
              {['分时', '1分钟', '5分钟', '15分钟', '30分钟', '60分钟'].map(t => <Period key={t}>{t}</Period>)}
              <Period $active>日线</Period>
              <Period>周线</Period>
              <Period>月线</Period>
              <Period>多周期</Period>
              <Period>更多<svg width="8" height="16" viewBox="0 0 8 16"><path d="M1 1l6 7-6 7" fill="none" stroke={GRAY} /></svg></Period>
            </Periods>
            <ToolCells>
              {['复权', '叠加', '统计', '画线', 'F10', '标记', '-自选', '返回'].map(t => <ToolCell key={t}>{t}</ToolCell>)}
            </ToolCells>
          </Toolbar>

          <Panel $h={715}>
            <PriceChart />
            <PanelHead $h={28} $pr={6}>
              <PanelName $mr={-4}>泰永长征(日线)</PanelName>
              <Chevron />
              <MaStat $c="#e8e8e8">MA5: 10.88<Arrow up c="#f02020" /></MaStat>
              <MaStat $c="#f0f000">MA10: 10.90<Arrow up c="#f02020" /></MaStat>
              <MaStat $c="#f000f0">MA20: 10.61<Arrow up c="#f02020" /></MaStat>
              <MaStat $c="#00e600">MA60: 11.31<Arrow c={CYAN} /></MaStat>
              <MaStat $c="#a8a8a8">MA120: 11.22<Arrow up c="#f02020" /></MaStat>
              <MaStat $c="#0a0ad0">MA250: 11.47</MaStat>
              <HeadTools>
                <svg width="16" height="24" viewBox="0 0 16 24"><path d="M8 2l7 10-7 10-7-10z" fill="none" stroke="#666" /></svg>
                <PanelIcon c="#707070" />
              </HeadTools>
            </PanelHead>
          </Panel>

          <Panel $h={311}>
            <IndicatorChart />
            <PanelHead $h={24}>
              <Chevron />
              <PanelName $mr={-5}>提前建仓选股</PanelName>
              <MaStat $c="#d0d0d0">结果: 0.00</MaStat>
            </PanelHead>
            <ImeBar>
              <ImeBtn $c="#900000" $bold>A</ImeBtn>
              <ImeBtn $wide>极品五笔</ImeBtn>
              <ImeBtn>
                <svg width="13" height="14" viewBox="0 0 13 14"><path d="M8 0C10 5 8 10 1 10c2 3 9 5 11-1 1-4-1-7-4-9z" fill="#111" /></svg>
              </ImeBtn>
              <ImeBtn>·,</ImeBtn>
              <ImeBtn>
                <svg width="17" height="12" viewBox="0 0 17 12"><rect width="17" height="12" fill="#e4e4e4" stroke="#777" /><path d="M2 3h13M2 6h13M2 9h13" stroke="#777" strokeDasharray="2 1" /></svg>
              </ImeBtn>
            </ImeBar>
          </Panel>

          <Panel $h={190}>
            <VolumeChart />
            <PanelHead $h={25}>
              <Chevron />
              <MaStat $c="#d8d8d8">VOLUME: 21866.42<Arrow c={CYAN} /></MaStat>
              <MaStat $c="#d8d8d8">MA5: 21414.74<Arrow c={CYAN} /></MaStat>
              <MaStat $c="#f0f000">MA10: 22549.86<Arrow c={CYAN} /></MaStat>
            </PanelHead>
          </Panel>

          <DateBar>
            <DateCell $w={107} $first>2022年</DateCell>
            <DateCell $w={245}>5</DateCell>
            <DateCell $w={270}>6</DateCell>
            <DateCell $w={174}>7</DateCell>
            <DateCursor>2022/07/20/三</DateCursor>
          </DateBar>
          <TabRow $h={26}>
            {tabs1.map(([t, w, c]) => <Tab key={t} $w={w} $c={c}>{t}</Tab>)}
          </TabRow>
          <TabRow $h={26}>
            {tabs2.map(([t, w, c]) => <Tab key={t} $w={w} $c={c}>{t}</Tab>)}
          </TabRow>
        </LeftColumn>

        <Quote>
          <NameRow>
            <StockName>泰永长征</StockName>
            <StockCode>002927</StockCode>
          </NameRow>
          <PriceRow>
            <span>11.14</span>
            <ChangeCell><UpTriangle />0.50</ChangeCell>
            <span>4.70%</span>
          </PriceRow>
          <SellBook>{book.map(r => <BookLine key={r[0]} r={r} />)}</SellBook>
          <Divider />
          <Section>{bookBuy.map(r => <BookLine key={r[0]} r={r} />)}</Section>
          <Section $pt={1}>
            {stats.map(s => (
              <StatRow key={s[0]} $h={28.7}>
                <Label>{s[0]}</Label><Val $c={s[2]}>{s[1]}</Val><i />
                <Label>{s[3]}</Label><Val $c={s[5]}>{withUnit(s[4])}</Val>
              </StatRow>
            ))}
          </Section>
          <Section $pb={5}>
            <StatRow $h={28.6}><Label>换手</Label><Val>0.99%</Val><i /><Label>股本</Label><Val>2.23<Unit>亿</Unit></Val></StatRow>
            <StatRow $h={28.6}><Label>净资</Label><Val>4.38</Val><i /><Label>流通</Label><Val>2.20<Unit>亿</Unit></Val></StatRow>
            <StatRow $h={28.6}><Label>收益<LabelSmall>(三)</LabelSmall></Label><Val>0.350</Val><i /><Label>PE<LabelSmall>(动)</LabelSmall></Label><Val>23.8</Val></StatRow>
          </Section>
          <Section $pb={3}>
            <FlowRow><Label>净流入额</Label><FlowCell><FlowBar $w={36} $c={RED} /><Val $c={RED}>604.9<Unit>万</Unit></Val></FlowCell><Val $c={RED}>25%</Val></FlowRow>
            <FlowRow><Label>大宗流入</Label><FlowCell><FlowBar $w={1.5} $c="#ddd" /><Val $c="#f0f0f0">0.00</Val></FlowCell><Val $c="#f0f0f0">0%</Val></FlowRow>
            <FlowRow><Label>5日净流入额</Label><FlowCell><FlowBar $w={33} $c={RED} /><Val $c={RED}>564.8<Unit>万</Unit></Val></FlowCell><Val $c={RED}>5%</Val></FlowRow>
            <FlowRow><Label>5日大宗流入</Label><FlowCell><FlowBar $w={1.5} $c={RED} /><Val $c={RED}>21.2<Unit>万</Unit></Val></FlowCell><Val $c={RED}>0%</Val></FlowRow>
          </Section>
          {ticks.map((t, i) => (
            <TickRow key={i}>
              <span>{t[0]}</span>
              <Val $c={RED} $left>{t[1]}</Val>
              <Val $c={OLIVE}>{t[2]}<Unit>万</Unit></Val>
              <i />
              <TickSide $buy={t[3] === 'B'}>{t[3]}</TickSide>
              <TickCount>{t[4]}</TickCount>
            </TickRow>
          ))}
        </Quote>

        <Sidebar>
          {sideIcons.map((ic, i) =>
            typeof ic === 'string'
              ? <SideSep key={i} $mb={Number(ic.slice(3))} />
              : <SideItem key={i}>{ic}</SideItem>
          )}
          {sidePeriods.map(p => <SideItem key={p} $active={p === '日'}>{p}</SideItem>)}
        </Sidebar>
      </Body>

      <StatusBar>
        <StatusLed />
        {status.map(([t, w, c, name], i) => {
          const [a, u] = t.split('|');
          return (
            <StatusCell key={i} $w={w} $c={c} $name={name}>
              {a}{u && <StatusUnit>{u}</StatusUnit>}
            </StatusCell>
          );
        })}
      </StatusBar>

      <Watermark>
        <WmTitle>公式指标网</WmTitle>
        <WatermarkLogo />
        <WmUrl>www.9m8.cn</WmUrl>
      </Watermark>
    </Page>
  );
}
